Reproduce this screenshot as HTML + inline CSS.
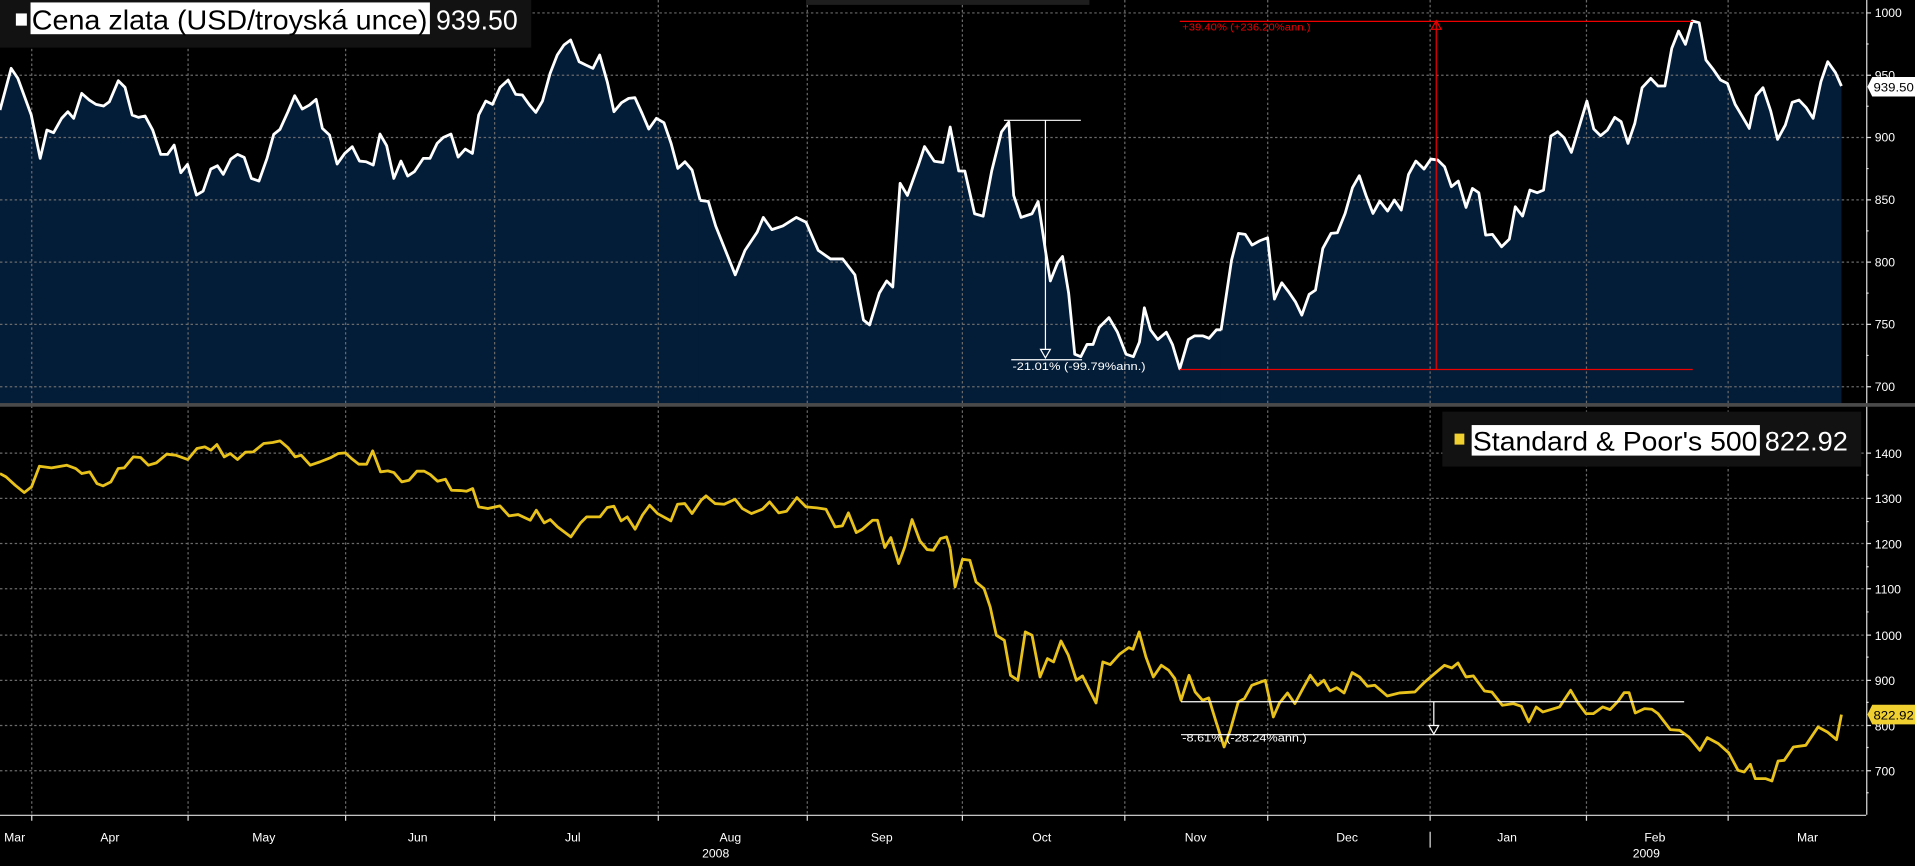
<!DOCTYPE html>
<html><head><meta charset="utf-8"><style>
html,body{margin:0;padding:0;background:#000;overflow:hidden}
svg{display:block}
text{font-family:"Liberation Sans",sans-serif}
</style></head><body>
<svg width="1915" height="866" viewBox="0 0 1568 709" preserveAspectRatio="none" xmlns="http://www.w3.org/2000/svg" font-family="Liberation Sans, sans-serif">
<rect width="1568" height="709" fill="#000"/>
<g fill="#031d39">
<polygon transform="matrix(0.3656,0,0,0.273,0,0)" points="0,330 25,205 40,235 70,345 90,475 105,390 120,398 138,355 152,335 165,355 183,280 200,300 215,313 232,318 245,305 265,242 280,262 296,345 310,352 325,348 342,390 360,463 375,463 390,435 405,518 420,493 440,585 455,573 472,507 487,497 500,523 517,477 532,463 547,472 563,535 580,543 598,475 613,403 627,388 645,335 660,287 677,327 693,315 708,298 722,385 738,405 755,492 772,460 789,440 805,483 820,485 836,495 851,402 866,437 882,535 898,483 913,528 928,515 948,475 963,475 979,430 993,412 1010,402 1026,471 1042,447 1058,460 1072,345 1088,303 1103,313 1120,262 1138,240 1155,283 1170,285 1186,315 1200,337 1215,303 1232,220 1248,165 1263,135 1278,120 1297,185 1312,195 1328,205 1343,165 1360,245 1375,335 1392,308 1408,295 1422,293 1438,340 1453,387 1470,355 1487,368 1503,430 1518,505 1534,485 1550,510 1570,600 1570,1210 0,1210"/>
<polygon points="572,164 580,165 586,185 602,225 610,205 620,190 625,178 632,188 641,185 652,178 660,182 670,205 680,212 690,212 700,225 707,262 712,266 720,240 726,230 731,235 737,150 743,160 752,135 757,120 765,132 772,133 778,104 785,140 790,140 798,175 805,177 812,140 820,108 826,100 830,160 836,178 845,175 850,165 856,205 860,230 866,215 870,210 875,240 880,290 885,292 890,282 895,282 900,268 908,260 915,272 922,290 928,292 933,280 937,252 942,270 948,278 955,272 960,282 966,302 973,278 978,275 985,275 990,277 996,270 1001,270 1001,331 572,331"/>
<polygon transform="matrix(0.3735,0,0,0.273,983,0)" points="43,990 68,780 83,700 98,703 113,735 130,722 147,713 162,897 178,848 193,875 208,905 222,945 238,883 252,870 268,745 286,700 300,698 317,640 333,563 348,527 363,587 378,640 393,603 410,633 425,600 440,630 456,523 472,483 490,507 505,477 520,480 535,500 550,560 565,543 582,622 596,565 610,578 625,705 640,703 660,740 677,717 690,620 706,648 722,570 738,578 752,570 768,408 783,395 797,413 813,457 830,380 847,303 862,387 877,407 892,390 908,352 922,365 937,430 952,370 968,263 987,235 1003,258 1018,258 1033,145 1048,93 1063,133 1078,63 1093,68 1108,180 1125,210 1140,240 1155,250 1172,313 1188,350 1203,385 1218,287 1233,263 1250,333 1265,418 1282,375 1297,307 1312,300 1328,323 1343,355 1360,245 1375,185 1392,218 1405,258 1405,1212 43,1212"/>
</g>
<g stroke="#6a6a6a" stroke-width="1" stroke-dasharray="2,2" fill="none">
<path d="M0 10.6H1528M0 61.6H1528M0 112.6H1528M0 163.6H1528M0 214.6H1528M0 265.6H1528M0 316.6H1528"/>
<path d="M0 371H1528M0 408H1528M0 445H1528M0 482H1528M0 520H1528M0 557H1528M0 594H1528M0 631H1528"/>
<path d="M26 0V667M154 0V667M283 0V667M405 0V667M539 0V667M661 0V667M788 0V667M921 0V667M1038 0V667M1171 0V667M1299 0V667M1415 0V667"/>
</g>
<rect x="0" y="330" width="1568" height="3" fill="#4a4a4a"/>
<g fill="none" stroke="#fff" stroke-width="2.8" stroke-linejoin="round">
<polyline vector-effect="non-scaling-stroke" transform="matrix(0.3656,0,0,0.273,0,0)" points="0,330 25,205 40,235 70,345 90,475 105,390 120,398 138,355 152,335 165,355 183,280 200,300 215,313 232,318 245,305 265,242 280,262 296,345 310,352 325,348 342,390 360,463 375,463 390,435 405,518 420,493 440,585 455,573 472,507 487,497 500,523 517,477 532,463 547,472 563,535 580,543 598,475 613,403 627,388 645,335 660,287 677,327 693,315 708,298 722,385 738,405 755,492 772,460 789,440 805,483 820,485 836,495 851,402 866,437 882,535 898,483 913,528 928,515 948,475 963,475 979,430 993,412 1010,402 1026,471 1042,447 1058,460 1072,345 1088,303 1103,313 1120,262 1138,240 1155,283 1170,285 1186,315 1200,337 1215,303 1232,220 1248,165 1263,135 1278,120 1297,185 1312,195 1328,205 1343,165 1360,245 1375,335 1392,308 1408,295 1422,293 1438,340 1453,387 1470,355 1487,368 1503,430 1518,505 1534,485 1550,510 1568,600"/>
<polyline vector-effect="non-scaling-stroke" points="573,164 580,165 586,185 602,225 610,205 620,190 625,178 632,188 641,185 652,178 660,182 670,205 680,212 690,212 700,225 707,262 712,266 720,240 726,230 731,235 737,150 743,160 752,135 757,120 765,132 772,133 778,104 785,140 790,140 798,175 805,177 812,140 820,108 826,100 830,160 836,178 845,175 850,165 856,205 860,230 866,215 870,210 875,240 880,290 885,292 890,282 895,282 900,268 908,260 915,272 922,290 928,292 933,280 937,252 942,270 948,278 955,272 960,282 966,302 973,278 978,275 985,275 990,277 996,270 1000,270"/>
<polyline vector-effect="non-scaling-stroke" transform="matrix(0.3735,0,0,0.273,983,0)" points="45,990 68,780 83,700 98,703 113,735 130,722 147,713 162,897 178,848 193,875 208,905 222,945 238,883 252,870 268,745 286,700 300,698 317,640 333,563 348,527 363,587 378,640 393,603 410,633 425,600 440,630 456,523 472,483 490,507 505,477 520,480 535,500 550,560 565,543 582,622 596,565 610,578 625,705 640,703 660,740 677,717 690,620 706,648 722,570 738,578 752,570 768,408 783,395 797,413 813,457 830,380 847,303 862,387 877,407 892,390 908,352 922,365 937,430 952,370 968,263 987,235 1003,258 1018,258 1033,145 1048,93 1063,133 1078,63 1093,68 1108,180 1125,210 1140,240 1155,250 1172,313 1188,350 1203,385 1218,287 1233,263 1250,333 1265,418 1282,375 1297,307 1312,300 1328,323 1343,355 1360,245 1375,185 1392,218 1405,258"/>
</g>
<g fill="none" stroke="#e8c21a" stroke-width="2.8" stroke-linejoin="round">
<polyline vector-effect="non-scaling-stroke" transform="matrix(0.4962,0,0,0.273,0,270.3)" points="0,430 10,440 25,465 40,487 52,470 65,408 85,413 110,405 125,415 135,430 148,425 160,460 170,467 183,455 195,415 205,413 220,380 232,382 245,405 258,398 275,372 290,375 310,388 325,355 338,350 348,360 358,343 370,380 380,370 392,388 405,366 418,365 435,340 450,337 462,332 475,352 487,380 497,375 512,405 528,395 545,383 558,370 570,368 580,385 592,402 605,402 615,362 628,425 640,422 650,427 663,455 675,450 688,423 700,423 710,433 722,453 735,447 745,480 760,481 770,483 780,475 790,530 805,535 825,527 840,557 855,553 875,570 885,540 898,578 908,568 920,590 942,620 958,578 968,560 990,560 1002,532 1013,528 1025,572 1035,560 1048,597 1060,555 1072,525 1085,550 1107,572 1118,522 1130,520 1142,550 1157,510 1165,497 1180,520 1195,522 1213,507 1225,535 1240,550 1258,537 1270,515 1285,548 1298,543 1315,502 1330,530 1348,533 1363,537 1378,590 1390,587 1400,548 1413,607 1423,597 1440,570 1448,570 1460,652 1470,622 1483,700 1493,650 1505,568 1518,632 1530,658 1540,660 1552,625 1562,620 1568,655"/>
<polyline vector-effect="non-scaling-stroke" transform="matrix(0.504,0,0,0.273,778,270.3)" points="0,655 8,770 20,687 32,690 42,755 55,775 65,830 75,915 88,930 98,1035 110,1050 122,905 133,915 146,1040 158,985 168,995 180,932 192,975 205,1050 215,1037 237,1118 248,995 260,1003 275,972 290,952 297,957 307,905 318,980 330,1040 343,1005 355,1020 365,1045 375,1110 388,1035 398,1085 410,1110 420,1103 432,1175 445,1250 455,1200 468,1115 478,1105 490,1065 512,1050 525,1160 535,1118 548,1088 560,1120 573,1075 585,1035 597,1065 607,1050 617,1082 628,1072 640,1088 653,1027 665,1040 678,1068 690,1065 710,1097 730,1088 755,1085 770,1057 787,1030 803,1005 815,1013 825,998 838,1040 850,1037 868,1082 880,1085 897,1125 915,1120 928,1128 940,1175 952,1130 963,1145 990,1130 1008,1080 1020,1118 1033,1150 1045,1150 1060,1130 1072,1138 1085,1113 1095,1087 1103,1087 1113,1148 1128,1135 1140,1137 1150,1150 1170,1198 1185,1200 1200,1220 1218,1260 1230,1222 1248,1240 1265,1268 1280,1320 1290,1325 1300,1302 1308,1345 1325,1345 1335,1352 1345,1292 1355,1290 1370,1250 1390,1245 1410,1190 1425,1205 1440,1228 1448,1153"/>
</g>
<g stroke="#fff" stroke-width="1" fill="none">
<path d="M822 98.5H885M856 98.5V292M828 294.5H886"/>
<path d="M852 286L860 286L856 293Z" fill="#031d39"/>
<path d="M967 574.5H1379M967 601.5H1379M1174 574V600"/>
<path d="M1170 594L1178 594L1174 601Z" fill="#000"/>
</g>
<text x="829" y="303" font-size="9" fill="#fff" font-family="Liberation Sans, sans-serif" textLength="109" lengthAdjust="spacingAndGlyphs">-21.01% (-99.79%ann.)</text>
<text x="968" y="607" font-size="9" fill="#fff" font-family="Liberation Sans, sans-serif" textLength="102" lengthAdjust="spacingAndGlyphs">-8.61% (-28.24%ann.)</text>
<g stroke="#e00" stroke-width="1" fill="none">
<path d="M966 17.5H1386M1176 17.5V302M966 302.5H1386"/>
<path d="M1172 24L1180 24L1176 17Z"/>
</g>
<text x="968" y="25" font-size="8.5" fill="#e00" font-family="Liberation Sans, sans-serif" textLength="105" lengthAdjust="spacingAndGlyphs">+39.40% (+236.20%ann.)</text>
<rect x="660" y="0" width="232" height="4" fill="#1e1e1e"/>
<rect x="0" y="0" width="435" height="39" fill="#121212"/>
<rect x="13" y="11" width="9" height="10" fill="#fff"/>
<rect x="25" y="2" width="327" height="26" fill="#fff"/>
<text x="26" y="24" font-size="23" fill="#000" textLength="324" lengthAdjust="spacingAndGlyphs">Cena zlata (USD/troyská unce)</text>
<text x="357" y="24" font-size="23" fill="#fff" textLength="67" lengthAdjust="spacingAndGlyphs">939.50</text>
<rect x="1181" y="337" width="343" height="45" fill="#121212"/>
<rect x="1191" y="355" width="8" height="9" fill="#f0cf30"/>
<rect x="1205" y="348" width="236" height="25" fill="#fff"/>
<text x="1206" y="369" font-size="22" fill="#000" textLength="233" lengthAdjust="spacingAndGlyphs">Standard &amp; Poor's 500</text>
<text x="1445" y="369" font-size="22" fill="#fff" textLength="68" lengthAdjust="spacingAndGlyphs">822.92</text>
<g stroke="#ddd" stroke-width="1" fill="none">
<path d="M1528.5 0V330M1528.5 333V667M0 667.5H1528"/>
<path d="M1528 10.6h4M1528 61.6h4M1528 112.6h4M1528 163.6h4M1528 214.6h4M1528 265.6h4M1528 316.6h4"/>
<path d="M1528 36h2M1528 87h2M1528 138h2M1528 189h2M1528 240h2M1528 291h2"/>
<path d="M1528 371h4M1528 408h4M1528 445h4M1528 482h4M1528 520h4M1528 557h4M1528 594h4M1528 631h4"/>
<path d="M1528 389h2M1528 427h2M1528 464h2M1528 501h2M1528 538h2M1528 575h2M1528 612h2M1528 649h2"/>
<path d="M26 667V672M154 667V672M283 667V672M405 667V672M539 667V672M661 667V672M788 667V672M921 667V672M1038 667V672M1171 667V672M1299 667V672M1415 667V672M1171 681V694"/>
</g>
<g font-size="10" fill="#fff">
<text x="1535" y="14">1000</text><text x="1535" y="65">950</text><text x="1535" y="116">900</text><text x="1535" y="167">850</text><text x="1535" y="218">800</text><text x="1535" y="269">750</text><text x="1535" y="320">700</text>
<text x="1535" y="375">1400</text><text x="1535" y="412">1300</text><text x="1535" y="449">1200</text><text x="1535" y="486">1100</text><text x="1535" y="524">1000</text><text x="1535" y="561">900</text><text x="1535" y="598">800</text><text x="1535" y="635">700</text>
</g>
<path d="M1533 63H1568V79H1533L1529 71Z" fill="#fff"/>
<text x="1534" y="75" font-size="10" fill="#000" textLength="33" lengthAdjust="spacingAndGlyphs">939.50</text>
<path d="M1533 577H1568V593H1533L1529 585Z" fill="#f0cf30"/>
<text x="1534" y="589" font-size="10" fill="#000" textLength="33" lengthAdjust="spacingAndGlyphs">822.92</text>
<g font-size="10" fill="#fff" text-anchor="middle">
<text x="12" y="689">Mar</text><text x="90" y="689">Apr</text><text x="216" y="689">May</text><text x="342" y="689">Jun</text><text x="469" y="689">Jul</text><text x="598" y="689">Aug</text><text x="722" y="689">Sep</text><text x="853" y="689">Oct</text><text x="979" y="689">Nov</text><text x="1103" y="689">Dec</text><text x="1234" y="689">Jan</text><text x="1355" y="689">Feb</text><text x="1480" y="689">Mar</text>
<text x="586" y="702">2008</text><text x="1348" y="702">2009</text>
</g>
</svg>
</body></html>
